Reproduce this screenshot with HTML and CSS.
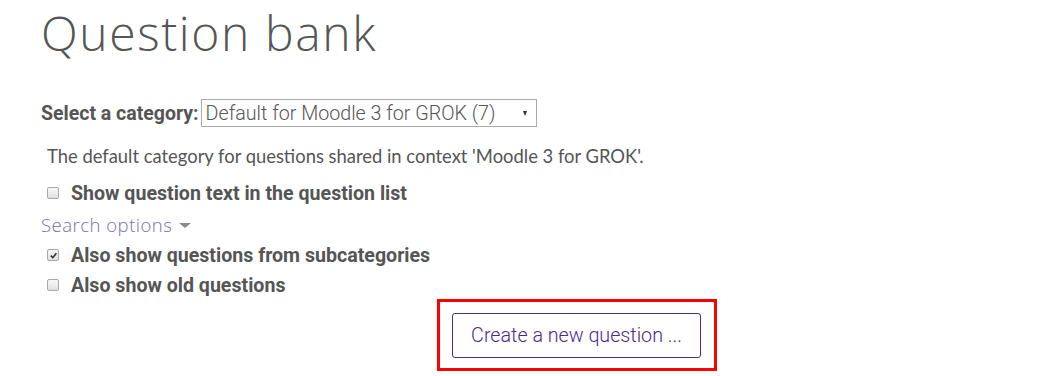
FILE: index.html
```html
<!DOCTYPE html>
<html>
<head>
<meta charset="utf-8">
<link rel="stylesheet" href="styles.css">
</head>
<body>
<div class="page">
  <h1 class="title">Question bank</h1>
  <div class="category-row">
    <span class="category-label">Select a category:</span>
    <div class="select">
      <span class="select-text">Default for Moodle 3 for GROK (7)</span>
      <span class="select-arrow"></span>
    </div>
  </div>
  <div class="desc">The default category for questions shared in context 'Moodle 3 for GROK'.</div>
  <label class="check-row check-row-first"><span class="cb"></span><span class="check-label">Show question text in the question list</span></label>
  <div class="search-options">Search options<span class="caret"></span></div>
  <label class="check-row"><span class="cb"><svg viewBox="0 0 10 10" width="9" height="9"><path d="M2 5.2 L4.2 7.4 L8.2 2.6" fill="none" stroke="#333" stroke-width="1.8"/></svg></span><span class="check-label">Also show questions from subcategories</span></label>
  <label class="check-row"><span class="cb"></span><span class="check-label">Also show old questions</span></label>
  <div class="actions">
    <div class="highlight">
      <div class="btn">Create a new question ...</div>
    </div>
  </div>
</div>
</body>
</html>
```
FILE: styles.css
```css
html, body { margin: 0; padding: 0; background: #fff; }
.page { padding-left: 41px; font-family: Roboto, "Liberation Sans", sans-serif; }
.title {
  margin: 0;
  padding-top: 3px;
  font-family: "Open Sans", Lato, sans-serif;
  font-weight: 300;
  font-size: 48px;
  line-height: 60px;
  letter-spacing: 1.6px;
  color: #555;
}
.category-row { display: flex; align-items: center; margin-top: 36px; height: 28px; }
.category-label { font-weight: 700; font-size: 19.5px; color: #555; }
.select {
  margin-left: 2px;
  width: 321px; height: 26px;
  border: 1px solid #aaa;
  display: flex; align-items: center; justify-content: space-between;
  padding: 0 9px 0 4px;
}
.select-text { font-size: 19.7px; font-weight: 300; color: #555; white-space: nowrap; }
.select-arrow {
  width: 0; height: 0;
  border-left: 2.5px solid transparent; border-right: 2.5px solid transparent; border-top: 5px solid #333;
}
.desc {
  margin-top: 17px; padding-left: 6px;
  font-family: Lato, sans-serif; font-size: 18.4px; color: #555; line-height: 24px;
}
.check-row { display: flex; align-items: center; height: 30px; }
.check-row-first { margin-top: 10px; }
.cb {
  width: 10px; height: 10px; margin-left: 6px; margin-right: 12px;
  border: 1px solid #a9a9a9; border-radius: 2px; background: linear-gradient(#f8f8f8, #e0e0e0);
  display: flex; align-items: center; justify-content: center;
}
.check-label { font-size: 19.6px; font-weight: 700; color: #555; white-space: nowrap; }
.search-options {
  display: flex; align-items: center;
  height: 32px;
  font-family: "Open Sans", Lato, sans-serif; font-weight: 300; font-size: 18.5px; letter-spacing: 0.5px; color: #7a6fa8;
}
.caret {
  width: 0; height: 0; margin-left: 7px; margin-top: 2px;
  border-left: 6.5px solid transparent; border-right: 6.5px solid transparent; border-top: 5px solid #8a8a8a;
}
.actions { display: flex; justify-content: center; padding-left: 59px; margin-top: -1px; }
.highlight { border: 3px solid #f00; padding: 11px 13px 10px 12px; }
.btn {
  box-sizing: border-box; width: 249px; height: 45px;
  border: 1px solid #4b2a89; border-radius: 3px;
  display: flex; align-items: center; justify-content: center;
  font-size: 19.7px; font-weight: 300; color: #4b2a89;
}
```
